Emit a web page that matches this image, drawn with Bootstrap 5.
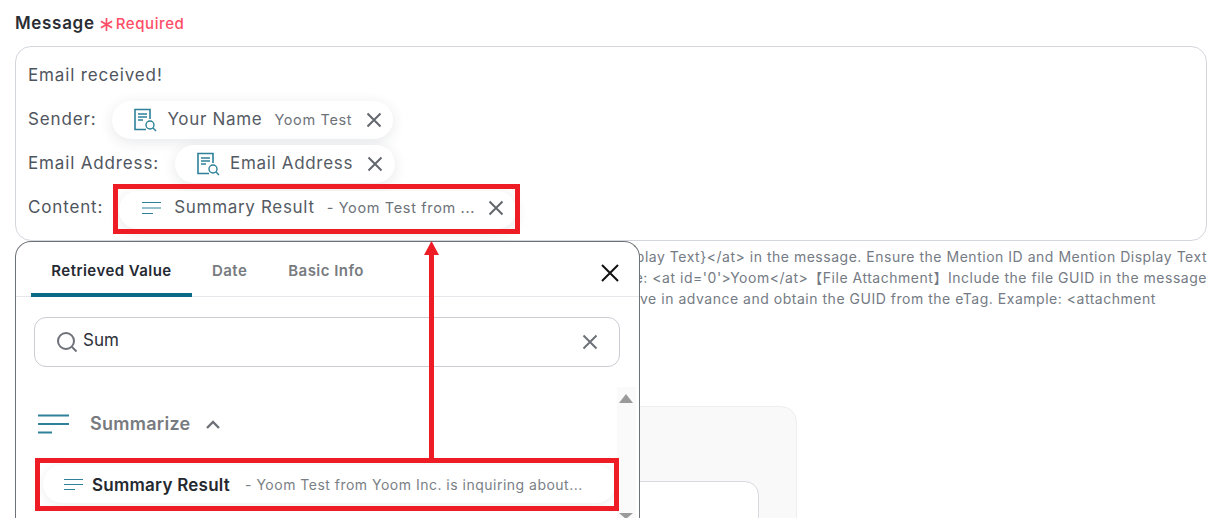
<!DOCTYPE html>
<html lang="en">
<head>
<meta charset="utf-8">
<title>Message form</title>
<link href="https://cdn.jsdelivr.net/npm/bootstrap@5.3.0/dist/css/bootstrap.min.css" rel="stylesheet">
<style>
html,body{height:518px;overflow:hidden;background:#fff}
body{font-family:Inter,"Noto Sans CJK JP",sans-serif;color:#4f555e;position:relative}
.page-wrap{padding:14px 21px 0 15px;height:518px;overflow:hidden}
.field-label{height:18px;line-height:18px;margin-bottom:14px;gap:5px}
.field-label b{font-size:17px;font-weight:600;color:#2a2d33;letter-spacing:.04em}
.req-star{line-height:0;margin-top:2px}
.req-text{color:#ff4d67;font-size:15px;font-weight:500;letter-spacing:.04em;margin-left:-2px;margin-top:1px}
.editor{height:195px;border:1px solid #d3d6dc;border-radius:16px;padding:7px 12px}
.ed-row{height:44px;gap:16px;font-size:17px;letter-spacing:.05em;white-space:nowrap}
.chip-pill{height:38px;border-radius:19px;background:#fff;box-shadow:0 3px 14px rgba(40,50,60,.11);padding:0 12px 0 21px;font-size:17px;letter-spacing:.04em;color:#555b64}
.chip-sub{font-size:14.5px;color:#6d7279;letter-spacing:.045em}
.chip-label{margin-left:10px}
.chip-a{width:281px;padding-right:11px}
.chip-b{width:220px}
.chip-b .chip-label{margin-left:10px}
.chip-c{width:397px;margin-top:3px;padding:0 12px 0 23px}
.chip-c .chip-label{margin-left:12px}
.chip-c>*{margin-bottom:3px}
.hint{font-size:14px;line-height:21px;color:#757b84;letter-spacing:.037em;margin-top:5px;white-space:nowrap;height:65px;overflow:hidden}
.hint-line{padding-left:621px}
.hint-line.mid{text-align:right;padding-left:0}
.hint-line.last{padding-left:625px}
.back-card{width:782px;height:160px;margin-top:95px;background:#f9f9fa;border:1px solid #eceef0;border-radius:16px;padding:74px 37px 0 0}
.back-inner{height:100px;background:#fff;border:1px solid #d6d9de;border-radius:14px}
.picker{position:absolute;left:15px;top:241px;width:625px;height:277px;overflow:hidden;background:#fff;border:1px solid #6d7178;border-bottom:0;border-radius:16px 16px 0 0}
.tab-row{height:55px;border-bottom:1px solid #e6e7ea;margin:0;padding-left:15px}
.tab-item{font-size:15px;font-weight:600;letter-spacing:.03em;color:#777b80;height:55px;padding-top:20px;line-height:17px}
.tab-on{color:#252a32;width:161px;text-align:center;border-bottom:4px solid #0b6a85;border-radius:4px 4px 0 0}
.tab-date{margin-left:20px}.tab-basic{margin-left:41px}
.picker-close{position:absolute;right:19px;top:21px;line-height:0}
.search-box{margin:20px 19px 0 18px;height:50px;border:1px solid #c9ccd1;border-radius:12px;padding:0 21px 0 21px;font-size:17px;color:#2d3138;gap:5px}
.search-box span{margin-top:-3px}
.group-head{margin:42px 0 0 22px;height:30px;font-size:18px;font-weight:600;letter-spacing:.015em;color:#777b80}
.group-head span{margin-top:-2px}
.result-row{position:absolute;left:27px;top:223px;width:572px;height:38px;border-radius:19px;box-shadow:0 2px 10px rgba(40,50,60,.09);background:#fff;padding-left:21px;white-space:nowrap}
.result-name{font-size:17px;font-weight:600;color:#24282f;letter-spacing:.015em;margin:3px 0 0 9px}
.result-sub{font-size:14px;color:#7a7f86;letter-spacing:.035em;margin-left:15px}
.scroll-track{position:absolute;right:3px;top:145px;width:19px;height:132px;background:#fafafa}
.tri-up,.tri-down{position:absolute;left:2px;width:0;height:0;border-left:7px solid transparent;border-right:7px solid transparent}
.tri-up{top:7px;border-bottom:9px solid #9a9a9a}
.tri-down{top:126px;border-top:6px solid #9a9a9a}
.red-box{position:absolute;border:5px solid #ee1c25;pointer-events:none}
.red-a{left:113px;top:184px;width:407px;height:50px}
.red-b{left:35px;top:458px;width:584px;height:53px}
.red-arrow{position:absolute;left:424px;top:241px;line-height:0}
</style>
</head>
<body>
<div class="page-wrap">
  <div class="field-label d-flex align-items-center">
    <b>Message</b>
    <span class="req-star"><svg width="13" height="13" viewBox="0 0 13 13" fill="none" stroke="#ff4d67" stroke-width="1.7"><path d="M6.5 0v13M.9 3.2l11.2 6.6M12.1 3.2L.9 9.8"/></svg></span>
    <span class="req-text">Required</span>
  </div>
  <div class="editor">
    <div class="ed-row d-flex align-items-center">Email received!</div>
    <div class="ed-row d-flex align-items-center">Sender:
      <span class="chip-pill chip-a d-flex align-items-center">
        <svg width="24" height="26" viewBox="0 0 24 26" fill="none" stroke="#2e8199" stroke-width="1.4"><path d="M17 12V2.5H2v20h11" stroke-width="1.6"/><path d="M5 7h9M5 10h9M5 13h5" stroke-width="1.3"/><circle cx="17" cy="18" r="4"/><path d="M20 21l3 3"/></svg>
        <span class="chip-label">Your Name</span><span class="chip-sub ms-2 ps-1">Yoom Test</span>
        <svg class="ms-auto" width="16" height="16" viewBox="0 0 16 16" stroke="#63676e" stroke-width="2" fill="none"><path d="M1.5 1.5l13 13M14.5 1.5l-13 13"/></svg>
      </span>
    </div>
    <div class="ed-row d-flex align-items-center">Email Address:
      <span class="chip-pill chip-b d-flex align-items-center">
        <svg width="24" height="26" viewBox="0 0 24 26" fill="none" stroke="#2e8199" stroke-width="1.4"><path d="M17 12V2.5H2v20h11" stroke-width="1.6"/><path d="M5 7h9M5 10h9M5 13h5" stroke-width="1.3"/><circle cx="17" cy="18" r="4"/><path d="M20 21l3 3"/></svg>
        <span class="chip-label">Email Address</span>
        <svg class="ms-auto" width="16" height="16" viewBox="0 0 16 16" stroke="#63676e" stroke-width="2" fill="none"><path d="M1.5 1.5l13 13M14.5 1.5l-13 13"/></svg>
      </span>
    </div>
    <div class="ed-row d-flex align-items-center">Content:
      <span class="chip-pill chip-c d-flex align-items-center">
        <svg width="20" height="14" viewBox="0 0 20 14" fill="none" stroke="#2e8199" stroke-width="1.2"><path d="M0 1.5h19M0 7h19M0 12.5h11"/></svg>
        <span class="chip-label">Summary Result</span><span class="chip-sub ms-2 ps-1">- Yoom Test from ...</span>
        <svg class="ms-auto" width="16" height="16" viewBox="0 0 16 16" stroke="#63676e" stroke-width="2" fill="none"><path d="M1.5 1.5l13 13M14.5 1.5l-13 13"/></svg>
      </span>
    </div>
  </div>
  <div class="hint">
    <div class="hint-line mid">play Text}&lt;/at&gt; in the message. Ensure the Mention ID and Mention Display Text</div>
    <div class="hint-line mid">e: &lt;at id='0'&gt;Yoom&lt;/at&gt;【File Attachment】Include the file GUID in the message</div>
    <div class="hint-line last">ve in advance and obtain the GUID from the eTag. Example: &lt;attachment</div>
  </div>
  <div class="back-card"><div class="back-inner"></div></div>
</div>

<div class="picker">
  <div class="tab-row d-flex">
    <div class="tab-item tab-on">Retrieved Value</div>
    <div class="tab-item tab-date">Date</div>
    <div class="tab-item tab-basic">Basic Info</div>
  </div>
  <div class="picker-close"><svg width="20" height="20" viewBox="0 0 20 20" stroke="#111" stroke-width="2" fill="none"><path d="M2 2l16 16M18 2L2 18"/></svg></div>
  <div class="search-box d-flex align-items-center">
    <svg width="22" height="22" viewBox="0 0 22 22" fill="none" stroke="#6d7178" stroke-width="2"><circle cx="10" cy="10" r="8"/><path d="M16 16l4.5 4.5"/></svg>
    <span>Sum</span>
    <svg class="ms-auto" width="16" height="16" viewBox="0 0 16 16" stroke="#6d7178" stroke-width="2" fill="none"><path d="M1.5 1.5l13 13M14.5 1.5l-13 13"/></svg>
  </div>
  <div class="group-head d-flex align-items-center">
    <svg width="32" height="20" viewBox="0 0 32 20" fill="none" stroke="#2e8199" stroke-width="1.8"><path d="M0 1.5h31M0 10h31M0 18.5h14"/></svg>
    <span class="ms-3 ps-1">Summarize</span>
    <svg class="ms-3" width="14" height="9" viewBox="0 0 14 9" fill="none" stroke="#6d7178" stroke-width="2.4"><path d="M1 8l6-6 6 6"/></svg>
  </div>
  <div class="result-row d-flex align-items-center">
    <svg width="19" height="13" viewBox="0 0 19 13" fill="none" stroke="#2e8199" stroke-width="1.2"><path d="M0 1.5h19M0 6.5h19M0 11.5h11"/></svg>
    <span class="result-name">Summary Result</span><span class="result-sub">- Yoom Test from Yoom Inc. is inquiring about...</span>
  </div>
  <div class="scroll-track"><span class="tri-up"></span><span class="tri-down"></span></div>
</div>

<div class="red-box red-a"></div>
<div class="red-box red-b"></div>
<div class="red-arrow">
  <svg width="15" height="220" viewBox="0 0 15 220"><path d="M7.5 0L15 14H10V220H5V14H0z" fill="#ee1c25"/></svg>
</div>
<script src="https://cdn.jsdelivr.net/npm/bootstrap@5.3.0/dist/js/bootstrap.bundle.min.js"></script>
</body>
</html>
